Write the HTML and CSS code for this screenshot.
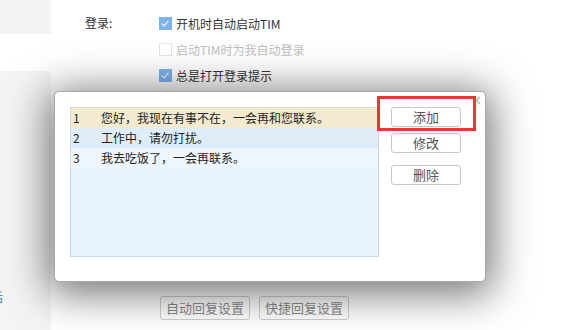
FILE: index.html
```html
<!DOCTYPE html>
<html>

<head>
  <meta charset="UTF-8">
  <title>自动回复设置</title>
  <link rel="stylesheet" href="styles.css">
</head>

<body>
  <div class="page">
    <div class="side">
      <div class="side-top"></div>
      <div class="side-gap"></div>
      <div class="side-rest">
        <span class="side-link">话</span>
      </div>
    </div>
    <div class="main">
      <div class="opt">
        <span class="opt-label">登录:</span>
        <div class="opt-list">
          <label class="check"><i class="box on"></i>开机时自动启动TIM</label>
          <label class="check off"><i class="box"></i>启动TIM时为我自动登录</label>
          <label class="check"><i class="box on"></i>总是打开登录提示</label>
        </div>
      </div>
      <div class="bottom-btns">
        <span class="btn-flat">自动回复设置</span>
        <span class="btn-flat">快捷回复设置</span>
      </div>
    </div>
  </div>

  <div class="dialog">
    <div class="list">
      <div class="row sel"><span class="num">1</span>您好，我现在有事不在，一会再和您联系。</div>
      <div class="row hover"><span class="num">2</span>工作中，请勿打扰。</div>
      <div class="row plain"><span class="num">3</span>我去吃饭了，一会再联系。</div>
    </div>
    <div class="actions">
      <span class="btn">添加</span>
      <span class="btn">修改</span>
      <span class="btn btn-del">删除</span>
    </div>
    <svg class="close" width="9" height="9" viewBox="0 0 9 9">
      <path d="M1 1 L8 8 M8 1 L1 8" stroke="#b9b9b9" stroke-width="1.6" />
    </svg>
  </div>
  <div class="mark"></div>
</body>

</html>
```

FILE: styles.css
```css
* {
  margin: 0;
  padding: 0;
  box-sizing: border-box;
}

body {
  width: 580px;
  height: 330px;
  overflow: hidden;
  position: relative;
  background: #fff;
  font-family: "Noto Sans CJK SC", "Noto Sans", sans-serif;
  font-size: 12px;
  color: #333;
}

.page {
  display: flex;
  height: 330px;
}

.side {
  width: 51px;
  display: flex;
  flex-direction: column;
  overflow: hidden;
}

.side-top {
  height: 34px;
  background: #f3f3f3;
}

.side-gap {
  height: 37px;
}

.side-rest {
  flex: 1;
  background: #f4f4f4;
  padding-top: 219px;
}

.side-link {
  display: block;
  margin-left: -9px;
  color: #3b6fc2;
  font-size: 12px;
  line-height: 14px;
}

.main {
  flex: 1;
  padding: 14px 0 0 34px;
}

.opt {
  display: flex;
}

.opt-label {
  width: 74px;
  line-height: 18px;
  color: #333;
}

.opt-list {
  display: flex;
  flex-direction: column;
  gap: 8px;
}

.check {
  display: flex;
  align-items: center;
  gap: 4px;
  height: 18px;
  color: #333;
}

.check.off {
  color: #bdbdbd;
}

.box {
  width: 13px;
  height: 13px;
  border: 1px solid #e2e2e2;
  background: #fff;
  position: relative;
}

.box.on {
  background: #7cb4ef;
  border-color: #7cb4ef;
}

.box.on::after {
  content: "";
  position: absolute;
  left: 3px;
  top: 1px;
  width: 3px;
  height: 6px;
  border: solid #fff;
  border-width: 0 1px 1px 0;
  transform: rotate(40deg);
}

.bottom-btns {
  display: flex;
  gap: 9px;
  margin: 212px 0 0 75px;
}

.btn-flat {
  width: 90px;
  height: 24px;
  line-height: 22px;
  text-align: center;
  border: 1px solid #cfcfcf;
  border-radius: 3px;
  color: #8a8a8a;
  font-size: 13px;
}

/* 弹出的对话框 */
.dialog {
  position: absolute;
  left: 54px;
  top: 91px;
  width: 432px;
  height: 191px;
  background: #fff;
  border: 1px solid #a8a8a8;
  border-radius: 5px;
  box-shadow: 0 6px 40px 6px rgba(0, 0, 0, 0.55);
  display: flex;
  gap: 12px;
  padding: 15px;
}

.list {
  width: 309px;
  height: 150px;
  border: 1px solid #c8dae7;
  background: #e8f4fb;
}

.row {
  display: flex;
  height: 20px;
  line-height: 20px;
  color: #222;
}

.row.sel {
  background: #f3ead0;
}

.row.hover {
  background: #deedf7;
}

.row.plain {
  background: #eef6fb;
}

.num {
  width: 30px;
  padding-left: 2px;
}

.actions {
  display: flex;
  flex-direction: column;
  gap: 6px;
}

.btn {
  width: 70px;
  height: 20px;
  line-height: 18px;
  text-align: center;
  border: 1px solid #c8c8c8;
  border-radius: 3px;
  color: #555;
  font-size: 13px;
}

.btn-del {
  margin-top: 6px;
}

.close {
  position: absolute;
  right: 4px;
  top: 4px;
}

.mark {
  position: absolute;
  left: 377px;
  top: 96px;
  width: 99px;
  height: 35px;
  border: 3px solid #ee3535;
}
```
